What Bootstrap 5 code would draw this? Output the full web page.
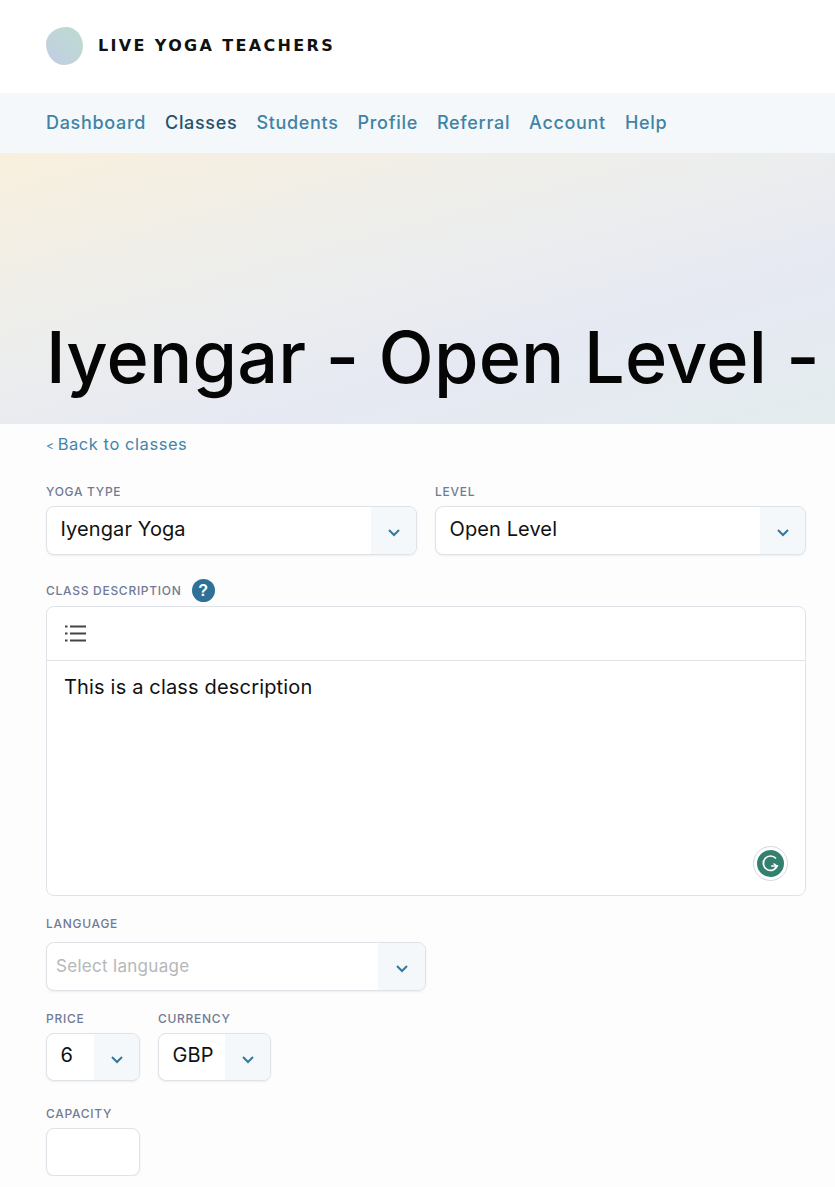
<!DOCTYPE html>
<html lang="en">
<head>
  <meta charset="UTF-8" />
  <meta name="viewport" content="width=device-width, initial-scale=1.0" />
  <title>Edit class | Live Yoga Teachers</title>
  <link href="https://cdn.jsdelivr.net/npm/bootstrap@5.3.3/dist/css/bootstrap.min.css" rel="stylesheet" />
  <style>
    body { font-family: Inter, "Liberation Sans", sans-serif; background: #fdfdfd; color: #111; overflow-x: hidden; }
    .top-bar { height: 93px; background: #fff; padding: 0 0 2px 46px; }
    .brand-text { font-family: "DejaVu Sans", sans-serif; font-size: 16px; font-weight: 700; letter-spacing: 2.35px; color: #111; text-decoration: none; }
    .blob { width: 37px; height: 38px; background: linear-gradient(45deg, #c3cde4, #bcdccf); border-radius: 55% 45% 50% 50% / 45% 50% 50% 55%; margin-right: 15px; }
    .site-nav { height: 60px; background: #f4f8fa; padding: 0 0 2px 46px; gap: 19px; }
    .site-nav a { font-size: 18px; font-weight: 500; letter-spacing: .68px; color: #3f83a6; text-decoration: none; }
    .site-nav a.current { color: #24536d; }
    .hero { height: 271px; background: linear-gradient(165deg, #f8f0dd 0%, #eeeeec 36%, #e6e9f3 68%, #e4ecee 100%); overflow: hidden; padding-left: 46px; }
    .hero h1 { font-size: 72px; font-weight: 550; line-height: 1; letter-spacing: .18px; white-space: nowrap; color: #050505; margin: 0 0 31px; }
    .page-body { padding: 10px 29px 0 46px; }
    .back-link { font-size: 16.5px; line-height: 20px; letter-spacing: .55px; color: #4486a9; text-decoration: none; display: block; margin-bottom: 30px; }
    .back-link span { font-size: 12px; line-height: 1; margin-right: -2px; }
    .field-label { display: block; font-size: 12px; line-height: 16px; font-weight: 500; letter-spacing: .72px; color: #717a94; text-transform: uppercase; margin-bottom: 6px; }
    .pick { height: 49px; border: 1px solid #dfe3e8; border-radius: 8px; background: #fff; box-shadow: 0 1px 2px rgba(30,50,70,.08); overflow: hidden; }
    .pick input { border: 0; outline: 0; min-width: 0; width: 100%; flex: 1 1 0; background: transparent; font-size: 20px; color: #111; padding: 0 0 4px 13.5px; letter-spacing: .1px; }
    .pick input::placeholder { font-size: 17px; letter-spacing: .3px; color: #b5b7ba; opacity: 1; }
    .pick .drop { width: 45px; flex: none; background: #f4f8fa; }
    .drop svg { display: block; width: 14px; height: 9px; margin-top: 4px; }
    .two-col { column-gap: 18px; margin-bottom: 24px; }
    .two-col > div { flex: 1 1 0; min-width: 0; }
    .help-dot { width: 23px; height: 23px; border-radius: 50%; background: #2f7096; color: #fff; font-size: 16px; font-weight: 700; line-height: 23px; text-align: center; margin-left: 10px; font-family: "Liberation Sans", sans-serif; }
    .editor { height: 290px; border: 1px solid #dfe3e8; border-radius: 8px; background: #fff; margin-bottom: 20px; position: relative; }
    .editor-tools { height: 54px; border-bottom: 1px solid #dfe3e8; padding-left: 18px; }
    .editor-text { padding: 14px 17px; font-size: 20px; line-height: 24px; letter-spacing: .17px; color: #111; }
    .g-badge { position: absolute; right: 17px; bottom: 14px; width: 35px; height: 35px; border: 1px solid #d5d9e6; border-radius: 50%; background: #fff; }
    .lang-label { margin-bottom: 10px; }
    .lang-pick { width: 380px; margin-bottom: 20px; }
    .lang-pick .drop { width: 47px; }
    .lang-pick input { padding-left: 9px; padding-bottom: 4px; }
    .price-pick { width: 94px; height: 48px; }
    .cur-pick { width: 113px; height: 48px; }
    .price-row { column-gap: 18px; margin-bottom: 25px; }
    .cap-pick { width: 94px; height: 48px; }
  </style>
</head>
<body>
  <!-- Header -->
  <header class="top-bar d-flex align-items-center">
    <div class="blob"></div>
    <a class="brand-text" href="#">LIVE YOGA TEACHERS</a>
  </header>

  <!-- Nav -->
  <nav class="site-nav d-flex align-items-center">
    <a href="#">Dashboard</a>
    <a href="#" class="current">Classes</a>
    <a href="#">Students</a>
    <a href="#">Profile</a>
    <a href="#">Referral</a>
    <a href="#">Account</a>
    <a href="#">Help</a>
  </nav>

  <!-- Page header -->
  <section class="hero d-flex align-items-end">
    <h1>Iyengar - Open Level -</h1>
  </section>

  <main class="page-body">
    <a class="back-link" href="#"><span>&lt;</span> Back to classes</a>

    <div class="two-col d-flex">
      <div>
        <label class="field-label">Yoga type</label>
        <div class="pick d-flex">
          <input type="text" value="Iyengar Yoga" />
          <div class="drop d-flex align-items-center justify-content-center"><svg viewBox="0 0 14 9"><path d="M2 2l5 5 5-5" fill="none" stroke="#35789c" stroke-width="2"/></svg></div>
        </div>
      </div>
      <div>
        <label class="field-label">Level</label>
        <div class="pick d-flex">
          <input type="text" value="Open Level" />
          <div class="drop d-flex align-items-center justify-content-center"><svg viewBox="0 0 14 9"><path d="M2 2l5 5 5-5" fill="none" stroke="#35789c" stroke-width="2"/></svg></div>
        </div>
      </div>
    </div>

    <div class="d-flex align-items-center mb-1">
      <span class="field-label mb-0">Class description</span>
      <span class="help-dot">?</span>
    </div>
    <div class="editor">
      <div class="editor-tools d-flex align-items-center">
        <svg width="21" height="17" viewBox="0 0 21 17"><path d="M0 1.5h2.5M5 1.5h16M0 8.5h2.5M5 8.5h16M0 15.5h2.5M5 15.5h16" stroke="#444" stroke-width="2" fill="none"/></svg>
      </div>
      <div class="editor-text">This is a class description</div>
      <div class="g-badge d-flex align-items-center justify-content-center">
        <svg width="27" height="27" viewBox="0 0 27 27"><circle cx="13.5" cy="13.5" r="13.5" fill="#34806f"/><path d="M19 8.5a7.2 7.2 0 1 0 1.2 7.5h-6" fill="none" stroke="#fff" stroke-width="1.7"/><path d="M16.5 13.5l3.5 2.6-2.6 3" fill="none" stroke="#fff" stroke-width="1.5"/></svg>
      </div>
    </div>

    <label class="field-label lang-label">Language</label>
    <div class="pick lang-pick d-flex">
      <input type="text" placeholder="Select language" />
      <div class="drop d-flex align-items-center justify-content-center"><svg viewBox="0 0 14 9"><path d="M2 2l5 5 5-5" fill="none" stroke="#35789c" stroke-width="2"/></svg></div>
    </div>

    <div class="price-row d-flex">
      <div>
        <label class="field-label">Price</label>
        <div class="pick price-pick d-flex">
          <input type="text" value="6" />
          <div class="drop d-flex align-items-center justify-content-center"><svg viewBox="0 0 14 9"><path d="M2 2l5 5 5-5" fill="none" stroke="#35789c" stroke-width="2"/></svg></div>
        </div>
      </div>
      <div>
        <label class="field-label">Currency</label>
        <div class="pick cur-pick d-flex">
          <input type="text" value="GBP" />
          <div class="drop d-flex align-items-center justify-content-center"><svg viewBox="0 0 14 9"><path d="M2 2l5 5 5-5" fill="none" stroke="#35789c" stroke-width="2"/></svg></div>
        </div>
      </div>
    </div>

    <label class="field-label">Capacity</label>
    <div class="pick cap-pick d-flex">
      <input type="text" />
    </div>
  </main>

  <script src="https://cdn.jsdelivr.net/npm/bootstrap@5.3.3/dist/js/bootstrap.bundle.min.js"></script>
</body>
</html>
